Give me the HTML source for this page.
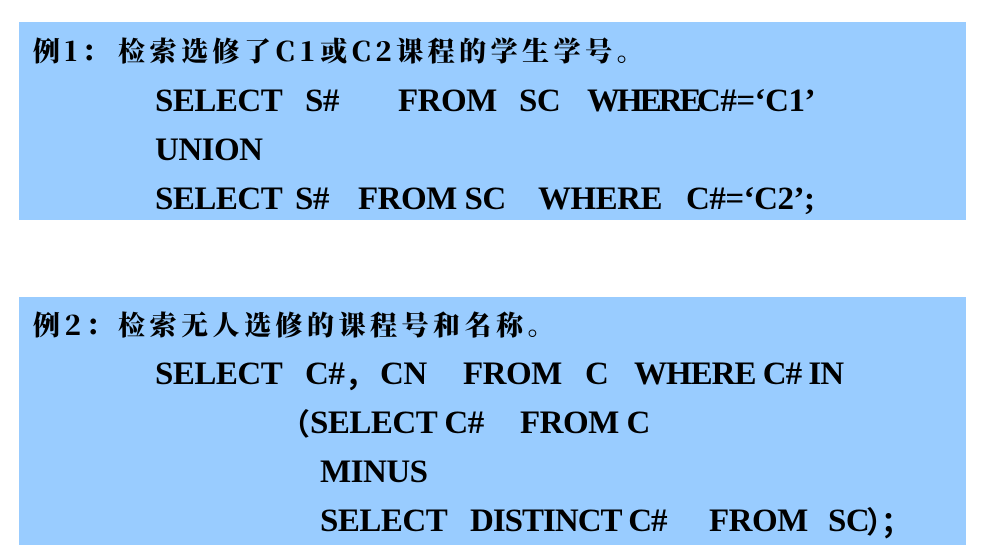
<!DOCTYPE html>
<html><head><meta charset="utf-8"><style>
body{margin:0;width:986px;height:558px;background:#fff;position:relative;overflow:hidden}
.box{position:absolute;left:19px;width:947px;background:#99ccff}
.t{position:absolute;white-space:pre;font-family:"Liberation Serif",serif;font-weight:bold;color:#000;line-height:1}
.s{font-size:33px;letter-spacing:-0.5px}
.h{font-size:27px;letter-spacing:4.5px;font-family:"Noto Serif CJK SC","Liberation Serif",serif;font-weight:900}
.c{font-family:"Noto Sans CJK SC",sans-serif;font-size:30px}
</style></head><body>
<div class="box" style="top:22px;height:198px"></div>
<div class="box" style="top:297px;height:248px"></div>

<span class="t h" style="left:33px;top:36px">例1：</span>
<span class="t h" style="left:118px;top:36px">检索选修了C1或C2课程的学生学号。</span>
<span class="t s" style="left:155px;top:85px">SELECT</span>
<span class="t s" style="left:305px;top:85px">S#</span>
<span class="t s" style="left:398px;top:85px">FROM</span>
<span class="t s" style="left:519px;top:85px">SC</span>
<span class="t s" style="left:587px;top:85px;letter-spacing:-3px">WHERE</span>
<span class="t s" style="left:697px;top:85px">C#=‘C1’</span>
<span class="t s" style="left:155px;top:134px">UNION</span>
<span class="t s" style="left:155px;top:183px">SELECT</span>
<span class="t s" style="left:295px;top:183px">S#</span>
<span class="t s" style="left:358px;top:183px">FROM SC</span>
<span class="t s" style="left:538px;top:183px">WHERE</span>
<span class="t s" style="left:686px;top:183px">C#=‘C2’;</span>

<span class="t h" style="left:33px;top:310px">例2：</span>
<span class="t h" style="left:118px;top:310px">检索无人选修的课程号和名称。</span>
<span class="t s" style="left:155px;top:358px">SELECT</span>
<span class="t s" style="left:305px;top:358px">C#</span>
<span class="t c" style="left:345px;top:358px">，</span>
<span class="t s" style="left:380px;top:358px">CN</span>
<span class="t s" style="left:463px;top:358px">FROM</span>
<span class="t s" style="left:585px;top:358px">C</span>
<span class="t s" style="left:634px;top:358px;letter-spacing:-1px">WHERE C# IN</span>
<span class="t c" style="left:280px;top:407px">（</span>
<span class="t s" style="left:310px;top:407px">SELECT C#</span>
<span class="t s" style="left:520px;top:407px">FROM C</span>
<span class="t s" style="left:320px;top:456px">MINUS</span>
<span class="t s" style="left:320px;top:505px">SELECT</span>
<span class="t s" style="left:470px;top:505px;letter-spacing:-1px">DISTINCT C#</span>
<span class="t s" style="left:709px;top:505px">FROM</span>
<span class="t s" style="left:828px;top:505px">SC</span>
<span class="t c" style="left:866px;top:505px">）；</span>
</body></html>
